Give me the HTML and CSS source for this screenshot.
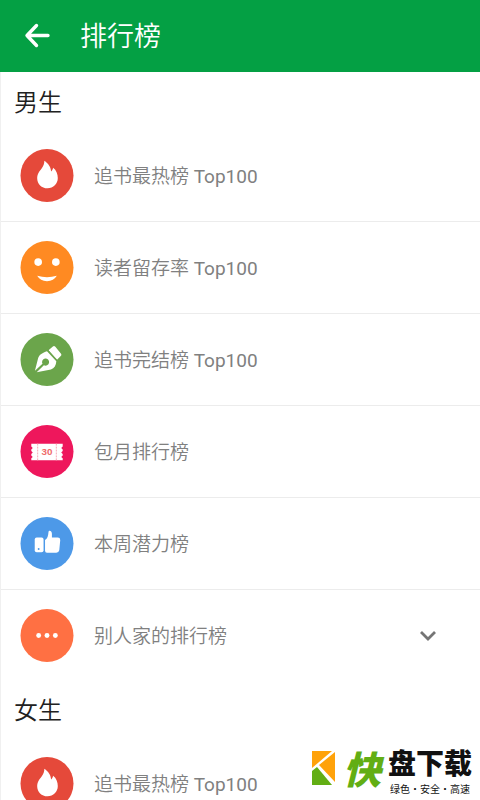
FILE: index.html
```html
<!DOCTYPE html>
<html lang="zh-CN">
<head>
<meta charset="utf-8">
<meta name="viewport" content="width=device-width, initial-scale=1">
<title>排行榜</title>
<link rel="stylesheet" href="styles.css">
</head>
<body>
<div class="screen">
  <header class="bar">
    <button class="back" type="button" aria-label="返回">
      <svg width="28" height="28" viewBox="0 0 28 28"><path d="M24 13.500H3M12.500 3.500L3 13.500l9.500 10" fill="none" stroke="#fff" stroke-width="3.400" stroke-linecap="round" stroke-linejoin="round"/></svg>
    </button>
    <h1 class="title">排行榜</h1>
  </header>
  <main class="content">
    <section>
      <h2 class="group">男生</h2>
      <ul class="list">
        <li><a class="row" href="#hot">
          <svg class="icon" viewBox="0 0 54 54"><circle cx="27" cy="27" r="27" fill="#e5493a"/><path d="M24.300 12c3.900 2.600 6.600 6.500 6.900 11 1-1.200 1.900-2.400 2-4 3.400 2.500 4.800 6.700 4.800 10.500C38 35.500 33.500 40 27.500 40S17 35.600 17 29.700c0-4.700 2.300-7 4.700-10.200 1.700-2.300 2.600-4.600 2.600-7.500z" fill="#fff"/></svg>
          <span class="label">追书最热榜 <span class="top">Top100</span></span></a></li>
        <li><a class="row" href="#retention">
          <svg class="icon" viewBox="0 0 54 54"><circle cx="27" cy="27" r="27" fill="#ff8a22"/><circle cx="18" cy="21.500" r="3.900" fill="#fff"/><circle cx="36" cy="21.500" r="3.900" fill="#fff"/><path d="M17 35.500q10 3 20 0C35 39 31.500 41 27 41s-8-2-10-5.500z" fill="#fff"/></svg>
          <span class="label">读者留存率 <span class="top">Top100</span></span></a></li>
        <li><a class="row" href="#finished">
          <svg class="icon" viewBox="0 0 54 54"><circle cx="27" cy="27" r="27" fill="#6ba54b"/><path d="M28.500 17.500l4.500-3.700q1.300-1 2.500.300l5.800 7q1 1.300-.300 2.400L37 27.500z" fill="#fff"/><path d="M27.500 17.500l10 11" stroke="#6ba54b" stroke-width="1.500"/><path d="M27 18.500l9.500 10.300c-.200 4.200-2 7.200-5.500 8.500L16.500 40l7.300-7.200a3.600 3.600 0 1 0-1.400-1.400L14.700 38.500l3.300-13c1-3.500 4.500-5.500 9-7z" fill="#fff"/></svg>
          <span class="label">追书完结榜 <span class="top">Top100</span></span></a></li>
        <li><a class="row" href="#monthly">
          <svg class="icon" viewBox="0 0 54 54"><circle cx="27" cy="27" r="27" fill="#ee175c"/><path d="M11 19h32v3l-1.500 1.500L43 25v1.500L41.500 28l1.500 1.500V31l-1.500 1.500L43 34v2H11v-2l1.500-1.500L11 31v-1.500l1.500-1.500-1.500-1.500V25l1.500-1.500L11 22z" fill="#fff"/><path d="M17.500 19v17M36.500 19v17" stroke="#f8a6b5" stroke-dasharray="2 1"/><text x="27" y="31" class="ticket">30</text></svg>
          <span class="label">包月排行榜</span></a></li>
        <li><a class="row" href="#potential">
          <svg class="icon" viewBox="0 0 54 54"><circle cx="27" cy="27" r="27" fill="#4d99e8"/><rect x="14.500" y="21" width="9" height="15" rx="2" fill="#fff"/><circle cx="18.500" cy="32.500" r="1" fill="#4d99e8"/><path d="M25 23.500c2.500-1.500 3.200-4.500 3.500-8 .200-2.500 3.500-1.500 3.500 1.500v4h6q2.500 0 2.500 2.500L39.500 34q-.500 2.500-3 2.500H27q-2 0-2-2z" fill="#fff"/></svg>
          <span class="label">本周潜力榜</span></a></li>
        <li><button class="row" type="button" aria-expanded="false">
          <svg class="icon" viewBox="0 0 54 54"><circle cx="27" cy="27" r="27" fill="#ff7043"/><circle cx="18.500" cy="27" r="2.500" fill="#fff"/><circle cx="27" cy="27" r="2.500" fill="#fff"/><circle cx="35.500" cy="27" r="2.500" fill="#fff"/></svg>
          <span class="label">别人家的排行榜</span>
          <svg class="chevron" width="18" height="12" viewBox="0 0 18 12"><path d="M2 2l7 7 7-7" fill="none" stroke="#757575" stroke-width="2.800"/></svg></button></li>
      </ul>
    </section>
    <section>
      <h2 class="group">女生</h2>
      <ul class="list">
        <li><a class="row" href="#hot-women">
          <svg class="icon" viewBox="0 0 54 54"><circle cx="27" cy="27" r="27" fill="#e5493a"/><path d="M24.300 12c3.900 2.600 6.600 6.500 6.900 11 1-1.200 1.900-2.400 2-4 3.400 2.500 4.800 6.700 4.800 10.500C38 35.500 33.500 40 27.500 40S17 35.600 17 29.700c0-4.700 2.300-7 4.700-10.200 1.700-2.300 2.600-4.600 2.600-7.500z" fill="#fff"/></svg>
          <span class="label">追书最热榜 <span class="top">Top100</span></span></a></li>
      </ul>
    </section>
  </main>
  <aside class="brand">
    <svg class="brand-mark" width="24" height="34" viewBox="0 0 24 34"><path d="M0 0h20L0 17z" fill="#ffa20a"/><path d="M23 1v30L7 14z" fill="#ffa20a"/><path d="M0 20l5-4 15 18H0z" fill="#62ae14"/></svg>
    <span class="brand-lead">快</span>
    <span class="brand-text"><span class="brand-name">盘下载</span><span class="brand-note">绿色·安全·高速</span></span>
  </aside>
</div>
</body>
</html>
```
FILE: styles.css
```css
* {
  box-sizing: border-box;
}

body {
  margin: 0;
  background: #fff;
  font-family: Roboto, "Noto Sans CJK SC", sans-serif;
}

.screen {
  position: relative;
  display: flex;
  flex-direction: column;
  height: 100vh;
  overflow: hidden;
}

.bar {
  display: flex;
  align-items: center;
  gap: 20px;
  flex: none;
  padding: 16px;
  background: #04a044;
}

.back {
  display: flex;
  padding: 6px 8px;
  margin: 0;
  border: 0;
  background: none;
}

.title {
  margin: 0;
  padding-top: 2px;
  color: #fff;
  font-size: 27px;
  font-weight: 350;
  line-height: 38px;
}

.content {
  flex: 1;
  min-height: 0;
  padding-top: 1px;
  border-left: 1px solid #f0f0f0;
  overflow-y: auto;
  scrollbar-width: none;
}

.group {
  margin: 0;
  padding: 12px 13px 9px;
  color: #212121;
  font-size: 24px;
  font-weight: 350;
  line-height: 36px;
}

.list {
  margin: 0;
  padding: 0;
  list-style: none;
}

.list li + li {
  border-top: 1px solid #ececec;
}

.row {
  display: flex;
  align-items: center;
  gap: 20px;
  width: 100%;
  padding: 19px 43px 19px 19px;
  border: 0;
  background: none;
  color: #808080;
  font: 350 19px/28px Roboto, "Noto Sans CJK SC", sans-serif;
  text-align: left;
  text-decoration: none;
}

.icon {
  flex: none;
  width: 54px;
  height: 53px;
}

.label {
  flex: 1;
  padding-top: 2px;
}

.top {
  font-weight: 400;
}

.ticket {
  fill: #ef6a6a;
  font: 700 10px "Liberation Sans", sans-serif;
  text-anchor: middle;
}

.brand {
  position: absolute;
  right: 8px;
  bottom: 4px;
  display: flex;
  align-items: center;
  gap: 7px;
  font-family: "Noto Sans CJK SC", sans-serif;
}

.brand-mark {
  margin-bottom: 8px;
}

.brand-lead {
  padding-bottom: 8px;
  color: #62ae14;
  font-size: 38px;
  font-style: italic;
  font-weight: 900;
  line-height: 40px;
}

.brand-text {
  display: flex;
  flex-direction: column;
  align-items: center;
  gap: 6px;
  color: #111;
}

.brand-name {
  font-size: 28px;
  font-weight: 900;
  line-height: 28px;
}

.brand-note {
  font-size: 10px;
  line-height: 14px;
}
```
